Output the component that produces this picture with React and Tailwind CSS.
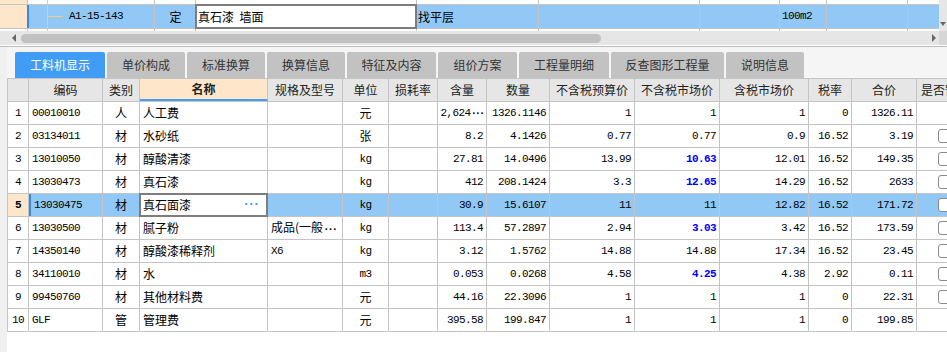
import React from 'react';

const CJK = "font-['Noto_Sans_CJK_SC',sans-serif]";
const MONO = "font-['Liberation_Mono',monospace] text-[11px] tracking-[-0.6px]";

const cols = [
  { w: 'w-[21px]', h: '', a: 'center' },
  { w: 'w-[74px]', h: '编码', a: 'left' },
  { w: 'w-[37px]', h: '类别', a: 'center' },
  { w: 'w-[128px]', h: '名称', a: 'left' },
  { w: 'w-[75px]', h: '规格及型号', a: 'left' },
  { w: 'w-[46px]', h: '单位', a: 'center' },
  { w: 'w-[49px]', h: '损耗率', a: 'right' },
  { w: 'w-[49px]', h: '含量', a: 'right' },
  { w: 'w-[63px]', h: '数量', a: 'right' },
  { w: 'w-[85px]', h: '不含税预算价', a: 'right' },
  { w: 'w-[85px]', h: '不含税市场价', a: 'right' },
  { w: 'w-[89px]', h: '含税市场价', a: 'right' },
  { w: 'w-[43px]', h: '税率', a: 'right' },
  { w: 'w-[65px]', h: '合价', a: 'right' },
  { w: 'w-[56px]', h: '是否暂估', a: 'center' },
];

// [code, type, name, spec, unit, loss, qty, amount, budget, market, taxed, rate, total, checkbox, blueMarket]
const rows = [
  ['00010010', '人', '人工费', '', '元', '', '2,624···', '1326.1146', '1', '1', '1', '0', '1326.11', false, false],
  ['03134011', '材', '水砂纸', '', '张', '', '8.2', '4.1426', '0.77', '0.77', '0.9', '16.52', '3.19', true, false],
  ['13010050', '材', '醇酸清漆', '', 'kg', '', '27.81', '14.0496', '13.99', '10.63', '12.01', '16.52', '149.35', true, true],
  ['13030473', '材', '真石漆', '', 'kg', '', '412', '208.1424', '3.3', '12.65', '14.29', '16.52', '2633', true, true],
  ['13030475', '材', '真石面漆', '', 'kg', '', '30.9', '15.6107', '11', '11', '12.82', '16.52', '171.72', true, false],
  ['13030500', '材', '腻子粉', '成品(一般···', 'kg', '', '113.4', '57.2897', '2.94', '3.03', '3.42', '16.52', '173.59', true, true],
  ['14350140', '材', '醇酸漆稀释剂', 'X6', 'kg', '', '3.12', '1.5762', '14.88', '14.88', '17.34', '16.52', '23.45', true, false],
  ['34110010', '材', '水', '', 'm3', '', '0.053', '0.0268', '4.58', '4.25', '4.38', '2.92', '0.11', true, true],
  ['99450760', '材', '其他材料费', '', '元', '', '44.16', '22.3096', '1', '1', '1', '0', '22.31', true, false],
  ['GLF', '管', '管理费', '', '元', '', '395.58', '199.847', '1', '1', '1', '0', '199.85', false, false],
];

const tabs = [
  { label: '工料机显示', w: 'w-[90px]' },
  { label: '单价构成', w: 'w-[78px]' },
  { label: '标准换算', w: 'w-[78px]' },
  { label: '换算信息', w: 'w-[78px]' },
  { label: '特征及内容', w: 'w-[89px]' },
  { label: '组价方案', w: 'w-[79px]' },
  { label: '工程量明细', w: 'w-[90px]' },
  { label: '反查图形工程量', w: 'w-[113px]' },
  { label: '说明信息', w: 'w-[78px]' },
];

const isCjk = (s) => /[\u4e00-\u9fff]/.test(s);

// truncated values end in a tight middle-dot ellipsis
const Truncated = ({ text }) => {
  const [head] = text.split('···');
  return (
    <>
      {head}
      <span className="font-['Liberation_Mono',monospace] text-[11px] tracking-[-2.4px] font-bold">···</span>
    </>
  );
};

// one strip of the upper grid; main = the selected quota row
const TopRow = ({ kind }) => {
  const main = kind === 'main';
  const h = kind === 'top' ? 'h-[5px] border-b border-[#c4c4c4]' : kind === 'main' ? 'h-[24px] border-b border-[#c4c4c4]' : 'h-[2px]';
  const bg = main ? 'bg-[#91c8f5]' : 'bg-white';
  return (
    <div className={`flex ${h} ${bg}`}>
      <div className={`w-[27px] ${kind === 'bottom' ? 'bg-white' : 'bg-[#fde6c9]'}`} />
      <div className={`w-[21px] border-r border-[#f3c78f] ${main ? 'border-l-2 border-l-[#3a86e6]' : 'border-l border-l-[#c4c4c4]'}`} />
      <div className="w-[107px] border-r border-[#c4c4c4] flex items-center">
        {main && (
          <>
            <div className="w-[15px] h-px bg-[#f3c78f]" />
            <span className={`${MONO} ml-[6px] text-black`}>A1-15-143</span>
          </>
        )}
      </div>
      <div className="w-[40px] flex items-center justify-center">
        {main && <span className={`${CJK} text-[12px] text-black ml-[1px]`}>定</span>}
      </div>
      <div className={`w-[222px] ${main ? 'relative' : 'border-l border-r border-[#c4c4c4]'}`}>
        {main && (
          <div className="absolute left-0 right-0 -top-px -bottom-px border-2 border-[#7d7d7d] bg-white flex items-center pl-[1px]">
            <span className={`${CJK} text-[12px] text-black whitespace-pre`}>真石漆  墙面</span>
          </div>
        )}
      </div>
      <div className="w-[122px] border-r border-[#c4c4c4] flex items-center">
        {main && <span className={`${CJK} text-[12px] text-black ml-[1px]`}>找平层</span>}
      </div>
      <div className="w-[161px] border-r border-[#c4c4c4]" />
      <div className="w-[80px] border-r border-[#c4c4c4]" />
      <div className="w-[47px] border-r border-[#c4c4c4] flex items-center">
        {main && <span className={`${MONO} ml-[2px] text-black`}>100m2</span>}
      </div>
      <div className="w-[81px] border-r border-[#c4c4c4]" />
      <div className="w-[31px]" />
    </div>
  );
};

const Checkbox = () => (
  <div className="w-[14px] h-[14px] rounded-[3px] border border-[#8a8a8a] bg-white" />
);

const Cell = ({ col, idx, value, selected, blue, last }) => {
  const align = col.a === 'center' ? 'justify-center' : col.a === 'right' ? 'justify-end pr-[3px]' : 'justify-start pl-[3px]';
  let bg = selected ? 'bg-[#91c8f5]' : 'bg-white';
  if (idx === 0 && selected) bg = 'bg-[#fde6c9]';
  const marker = idx === 1 && selected ? 'border-l-2 border-l-[#3a86e6] pl-[1px]' : '';
  const border = last ? '' : 'border-r border-[#c4c4c4]';

  if (idx === 3 && selected) {
    return (
      <div className={`${col.w} shrink-0 h-full relative ${border}`}>
        <div className="absolute -left-px -top-px right-[-1px] -bottom-px border-2 border-[#7d7d7d] bg-white flex items-center pl-[2px] z-10">
          <span className={`${CJK} text-[12px] text-black flex-1`}>{value}</span>
          <span className="font-['Liberation_Mono',monospace] text-[#3a8ee6] text-[12px] font-bold tracking-[-2px] mr-[8px]">···</span>
        </div>
      </div>
    );
  }

  let content = null;
  if (idx === 14) {
    content = value ? <Checkbox /> : null;
  } else if (value !== '') {
    const font = idx === 0 ? `${MONO} ${selected ? 'font-bold' : ''}` : isCjk(value) ? `${CJK} text-[12px]` : MONO;
    content = (
      <span className={`${font} whitespace-nowrap ${blue ? 'text-[#0000ff] font-bold' : 'text-black'}`}>
        {value.includes('···') ? <Truncated text={value} /> : value}
      </span>
    );
  }
  return (
    <div className={`${col.w} shrink-0 h-full flex items-center overflow-hidden ${align} ${bg} ${border} ${marker}`}>
      {content}
    </div>
  );
};

export default function App() {
  return (
    <div className="w-[947px] h-[352px] overflow-hidden bg-white flex flex-col">
      {/* upper grid with its scrollbars */}
      <div className="flex h-[31px]">
        <div className="w-[939px] flex flex-col">
          <TopRow kind="top" />
          <TopRow kind="main" />
          <TopRow kind="bottom" />
        </div>
        <div className="w-[8px] bg-[#e6e6e6] flex flex-col items-center justify-end pb-[5px]">
          <div className="w-0 h-0 border-l-[3px] border-r-[3px] border-t-[4px] border-l-transparent border-r-transparent border-t-[#666]" />
        </div>
      </div>
      <div className="flex h-[14px]">
        <div className="w-[939px] bg-[#e6e6e6] flex items-center">
          <div className="ml-[12px] w-0 h-0 border-t-[4px] border-b-[4px] border-r-[4px] border-t-transparent border-b-transparent border-r-[#666]" />
          <div className="ml-[5px] w-[580px] h-[9px] rounded-full bg-[#c1c1c1]" />
          <div className="ml-auto mr-[3px] w-0 h-0 border-t-[4px] border-b-[4px] border-l-[4px] border-t-transparent border-b-transparent border-l-[#666]" />
        </div>
        <div className="w-[8px] bg-[#d6d6d6]" />
      </div>
      <div className="h-px bg-white" />
      <div className="h-px bg-[#bdbdbd]" />

      {/* lower panel */}
      <div className="flex flex-1 min-h-0">
        <div className="w-[7px] bg-[#f0f0f0]" />
        <div className="flex-1 flex flex-col min-w-0 bg-white">
          <div className="bg-[#f5f5f5] pt-[5px] pl-[8px] flex gap-[2px]">
            {tabs.map((t, i) => (
              <div
                key={t.label}
                className={`${t.w} h-[26px] shrink-0 rounded-t-[2px] flex items-center justify-center ${CJK} text-[12px] ${
                  i === 0 ? 'bg-[#419cf5] text-white' : 'bg-[#c2c2c2] text-[#333]'
                }`}
              >
                {t.label}
              </div>
            ))}
          </div>

          <div className="border-l border-[#c4c4c4]">
            {/* header */}
            <div className="flex h-[24px] border-y border-[#c4c4c4] bg-[#e6e6e6]">
              {cols.map((c, i) => (
                <div
                  key={i}
                  className={`${c.w} shrink-0 h-full flex items-center justify-center ${CJK} text-[12px] text-[#222] whitespace-nowrap overflow-hidden ${
                    i === cols.length - 1 ? '' : 'border-r border-[#c4c4c4]'
                  } ${i === 3 ? 'bg-[#fde6c9] font-bold border-b-2 border-b-[#4a9cf0]' : ''}`}
                >
                  {c.h}
                </div>
              ))}
            </div>
            {/* body */}
            {rows.map((r, ri) => {
              const selected = ri === 4;
              const values = [String(ri + 1), ...r.slice(0, 13), r[13]];
              return (
                <div key={ri} className="flex h-[23px] border-b border-[#c4c4c4]">
                  {cols.map((c, ci) => (
                    <Cell
                      key={ci}
                      col={c}
                      idx={ci}
                      value={values[ci]}
                      selected={selected}
                      blue={ci === 10 && r[14]}
                      last={ci === cols.length - 1}
                    />
                  ))}
                </div>
              );
            })}
          </div>
        </div>
      </div>
    </div>
  );
}
